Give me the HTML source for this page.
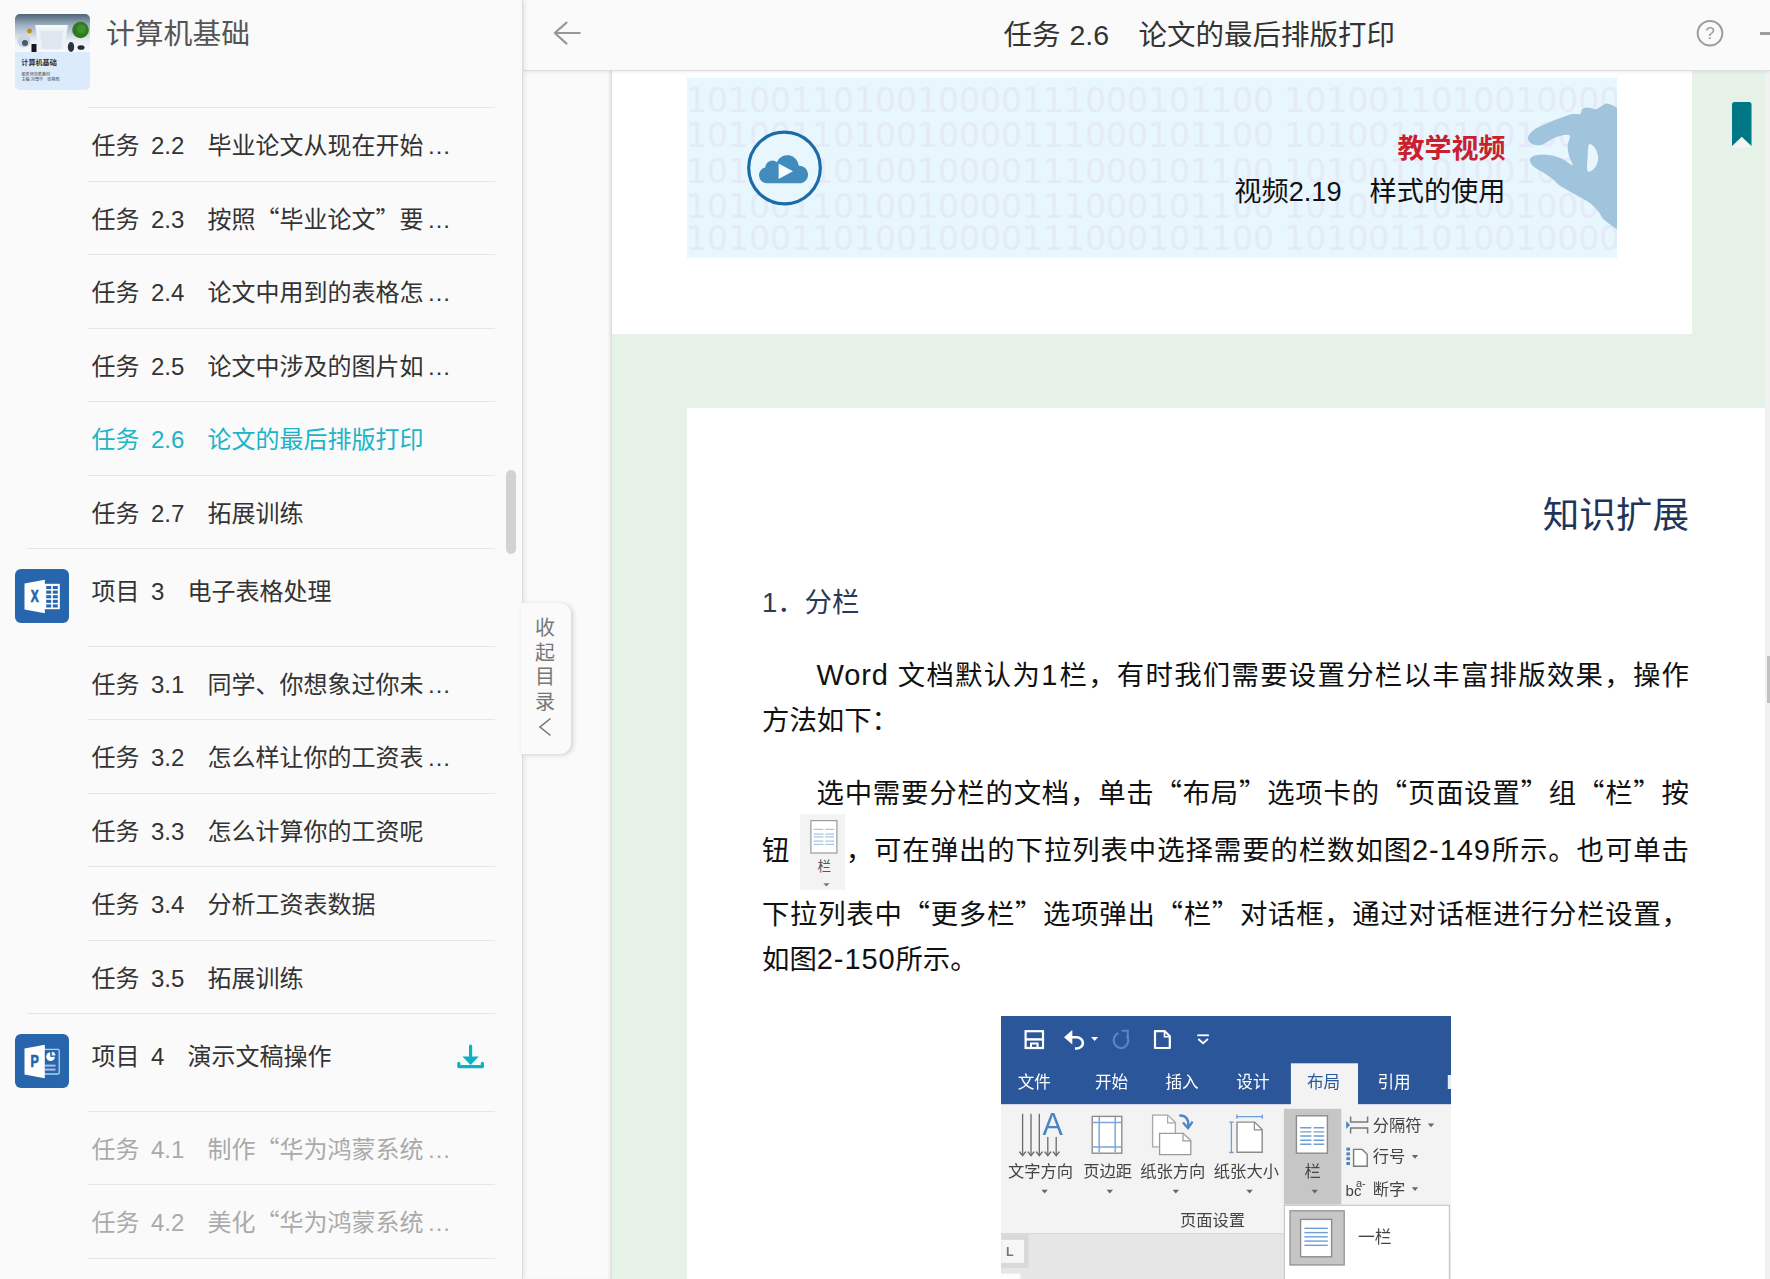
<!DOCTYPE html>
<html lang="zh-CN">
<head>
<meta charset="utf-8">
<title>任务 2.6 论文的最后排版打印</title>
<style>
*{box-sizing:border-box;margin:0;padding:0}
html,body{width:1770px;height:1279px;overflow:hidden;background:#fafafa}
body{position:relative;font-family:"Liberation Sans","Noto Sans CJK SC",sans-serif;color:#333}
.d{font-size:29px;line-height:0;letter-spacing:.9px}
.q{font-family:"Noto Sans CJK SC",sans-serif;line-height:0}
/* ---------- sidebar ---------- */
#side{position:absolute;left:0;top:0;width:523px;height:1279px;background:#fafafa;border-right:1px solid #dcdcdc;box-shadow:1px 0 5px rgba(0,0,0,.10);z-index:5}
#thumb{position:absolute;left:15px;top:14px;width:75px;height:75.5px;border-radius:5px;overflow:hidden;background:#dcebfb}
#thumb .ph{position:absolute;left:0;top:0;width:75px;height:38px;background:linear-gradient(180deg,#4e6477 0%,#9fb2c4 30%,#e9eff5 70%,#f8fafc 100%)}
#thumb .t1{position:absolute;left:6.3px;top:44.7px;font-size:7.1px;line-height:8px;color:#333;font-weight:bold;white-space:nowrap}
#thumb .t2{position:absolute;left:6.5px;top:58.2px;font-size:4.1px;line-height:5.3px;color:#444;white-space:nowrap}
#btitle{position:absolute;left:106px;top:14px;font-size:28.8px;line-height:40px;color:#555;white-space:nowrap}
.it{position:absolute;left:88px;width:407px;height:74px;border-top:1px solid #e6e6e6;font-size:24px;line-height:74px;white-space:nowrap;color:#333}
.it b{font-weight:normal;position:absolute;top:1px}
.it .a{left:3.5px}.it .n{left:63px}.it .t{left:119.5px}
.it i{font-style:normal;margin-left:3.4px}
.it.on{color:#1cb4c7}
.it.dis{color:#aaa}
.pj{position:absolute;left:27px;width:468px;height:98px;border-top:1px solid #e6e6e6;font-size:24px;white-space:nowrap;color:#333}
.pj b{font-weight:normal;position:absolute;top:26px;line-height:34px}
.pj .a{left:64.5px}.pj .n{left:124px}.pj .t{left:160.5px}
.pj svg{position:absolute;left:-11.7px;top:20.4px}
#sthumb{position:absolute;left:506px;top:470px;width:10px;height:84px;border-radius:5px;background:#d2d2d2}
#fold{position:absolute;left:521px;top:603px;width:50px;height:151px;background:#fafafa;border-radius:0 11px 11px 0;box-shadow:2px 1px 5px rgba(0,0,0,.16);z-index:6;font-size:20px;color:#777;text-align:center}
#fold span{position:absolute;left:2px;width:44px;height:24px;line-height:24px;text-align:center}
/* ---------- header ---------- */
#hd{position:absolute;left:524px;top:0;width:1246px;height:71px;background:#fafafa;border-bottom:1px solid #dedede;box-shadow:0 1px 3px rgba(0,0,0,.08);z-index:4}
#hd b{font-weight:normal;position:absolute;top:15px;font-size:28.5px;line-height:40px;color:#333;white-space:nowrap}
/* ---------- main ---------- */
#gut{position:absolute;left:524px;top:70px;width:88px;height:1209px;background:#fafafa;box-shadow:inset -4px 0 4px -3px rgba(0,0,0,.18)}
#main{position:absolute;left:612px;top:70px;width:1153px;height:1209px;background:#e6f2e8;overflow:hidden}
#track{position:absolute;left:1765px;top:70px;width:5px;height:1209px;background:#f1f1f1}
#track i{position:absolute;left:2px;top:586px;width:3px;height:47px;background:#c1c1c1}
#c1{position:absolute;left:0;top:0;width:1080px;height:264px;background:#fff}
#ban{position:absolute;left:75px;top:8px;width:930px;height:180px;background:#e8f6fe;overflow:hidden}
#ban .bits{position:absolute;left:-1px;top:5px;font-family:"DejaVu Sans",sans-serif;font-size:33px;line-height:35.3px;color:#e4ebf7;white-space:nowrap}
#ban .bits p:last-child{margin-top:-3px}
#ban .r{position:absolute;right:111.5px;top:52.5px;font-size:27px;line-height:36px;font-weight:bold;color:#c8202f;white-space:nowrap}
#ban .s{position:absolute;right:111.5px;top:96px;font-size:27.2px;line-height:36px;color:#111;white-space:nowrap}
#c2{position:absolute;left:75px;top:338px;width:1078px;height:900px;background:#fff}
#kt{position:absolute;right:76px;top:83px;font-size:36.6px;line-height:50px;color:#1f3557;white-space:nowrap}
#h1{position:absolute;left:75px;top:175px;font-size:27.4px;line-height:40px;color:#2b3a55;white-space:nowrap}
.p{position:absolute;left:75px;width:927px;font-size:27.4px;line-height:45px;color:#111}
.p div{white-space:nowrap;text-align:justify;text-align-last:justify}
.p div.l{text-align-last:left}
.p div.i{padding-left:54.5px}
.ic{display:inline-block;position:relative;width:45px;height:76px;margin:-1.5px 0 0 .9px;vertical-align:middle;background:#f3f3f3;letter-spacing:0}
.ic svg{position:absolute;left:0;top:0}
.ic em{text-align-last:center;position:absolute;left:0;top:44px;width:45px;text-align:center;font-style:normal;font-size:13.5px;line-height:18px;color:#555;padding-left:4px}
</style>
</head>
<body>
<div id="side">
<div id="thumb"><div class="ph"></div>
<svg width="75" height="38" viewBox="0 0 75 38" style="position:absolute;left:0;top:0">
<polygon points="20,11 53,11 49,36 24,36" fill="#eef3f8"/>
<rect x="22" y="11" width="29" height="3.2" fill="#f4fbf0"/>
<polygon points="25,17 48,17 46,35 27,35" fill="#dfe7f1"/>
<circle cx="65.5" cy="16" r="8.3" fill="#2f7a1f"/><circle cx="66.5" cy="15" r="4.5" fill="#3f8f2a"/>
<circle cx="9" cy="27" r="6.5" fill="#c9d5e0"/><circle cx="10" cy="29" r="3" fill="#49586a"/>
<circle cx="14.5" cy="17" r="2.4" fill="#c08a1c"/>
<rect x="16.5" y="30" width="5" height="8" fill="#15181d"/>
<ellipse cx="56" cy="33" rx="3.2" ry="5" fill="#2b3440"/><ellipse cx="66" cy="33.5" rx="3.5" ry="2.3" fill="#232a33"/>
</svg>
<div class="t1">计算机基础</div><div class="t2">服务师范类教材<br>主编:刘雪华　张艳辉</div></div>
<div id="btitle">计算机基础</div>
<div class="it " style="top:107px"><b class="a">任务</b><b class="n">2.2</b><b class="t">毕业论文从现在开始<i>…</i></b></div>
<div class="it " style="top:181px"><b class="a">任务</b><b class="n">2.3</b><b class="t">按照<span class="q">“</span>毕业论文<span class="q">”</span>要<i>…</i></b></div>
<div class="it " style="top:254px"><b class="a">任务</b><b class="n">2.4</b><b class="t">论文中用到的表格怎<i>…</i></b></div>
<div class="it " style="top:328px"><b class="a">任务</b><b class="n">2.5</b><b class="t">论文中涉及的图片如<i>…</i></b></div>
<div class="it on" style="top:401px"><b class="a">任务</b><b class="n">2.6</b><b class="t">论文的最后排版打印</b></div>
<div class="it " style="top:475px"><b class="a">任务</b><b class="n">2.7</b><b class="t">拓展训练</b></div>
<div class="it " style="top:646px"><b class="a">任务</b><b class="n">3.1</b><b class="t">同学、你想象过你未<i>…</i></b></div>
<div class="it " style="top:719px"><b class="a">任务</b><b class="n">3.2</b><b class="t">怎么样让你的工资表<i>…</i></b></div>
<div class="it " style="top:793px"><b class="a">任务</b><b class="n">3.3</b><b class="t">怎么计算你的工资呢</b></div>
<div class="it " style="top:866px"><b class="a">任务</b><b class="n">3.4</b><b class="t">分析工资表数据</b></div>
<div class="it " style="top:940px"><b class="a">任务</b><b class="n">3.5</b><b class="t">拓展训练</b></div>
<div class="it dis" style="top:1111px"><b class="a">任务</b><b class="n">4.1</b><b class="t">制作<span class="q">“</span>华为鸿蒙系统<i>…</i></b></div>
<div class="it dis" style="top:1184px"><b class="a">任务</b><b class="n">4.2</b><b class="t">美化<span class="q">“</span>华为鸿蒙系统<i>…</i></b></div>
<div class="it dis" style="top:1258px"></div>
<div class="pj" style="top:548px"><svg width="54" height="54" viewBox="0 0 54 54"><rect width="54" height="54" rx="6" fill="#2765ad"/>
<rect x="29" y="14.8" width="15.8" height="25.4" fill="#fff"/>
<g fill="#2765ad"><rect x="31.2" y="17" width="5" height="3.1"/><rect x="37.8" y="17" width="5" height="3.1"/>
<rect x="31.2" y="21.6" width="5" height="3.1"/><rect x="37.8" y="21.6" width="5" height="3.1"/>
<rect x="31.2" y="26.2" width="5" height="3.1"/><rect x="37.8" y="26.2" width="5" height="3.1"/>
<rect x="31.2" y="30.8" width="5" height="3.1"/><rect x="37.8" y="30.8" width="5" height="3.1"/>
<rect x="31.2" y="35.4" width="5" height="3.1"/><rect x="37.8" y="35.4" width="5" height="3.1"/></g>
<polygon points="9.5,14.4 29.8,10.8 29.8,44.2 9.5,40.6" fill="#fff"/>
<text x="15.700" y="33.100" font-size="16.800" font-weight="bold" textLength="8" lengthAdjust="spacingAndGlyphs" fill="#2765ad" stroke="#2765ad" stroke-width=".7" font-family="Liberation Sans, sans-serif">X</text></svg><b class="a">项目</b><b class="n">3</b><b class="t">电子表格处理</b></div>
<div class="pj" style="top:1013px"><svg width="54" height="54" viewBox="0 0 54 54"><rect width="54" height="54" rx="6" fill="#2765ad"/>
<rect x="28" y="15.4" width="16.2" height="24.6" rx="1.2" fill="none" stroke="#b9cfea" stroke-width="1.3"/>
<circle cx="35.6" cy="22.6" r="4.4" fill="#fff"/><path d="M35.6 22.6v-4.9a4.9 4.9 0 0 1 4.9 4.9z" fill="#2765ad" stroke="#2765ad" stroke-width=".8"/>
<path d="M36.8 21.4v-3.7a4 4 0 0 1 3.7 3.7z" fill="#e8f0fa"/>
<rect x="30" y="30.6" width="10.5" height="2" fill="#a9c3e4"/><rect x="30" y="34.6" width="10.5" height="2" fill="#a9c3e4"/>
<polygon points="9.5,14.4 29.8,10.8 29.8,44.2 9.5,40.6" fill="#fff"/>
<text x="15.600" y="33.100" font-size="16.200" font-weight="bold" textLength="8.300" lengthAdjust="spacingAndGlyphs" fill="#2765ad" stroke="#2765ad" stroke-width=".7" font-family="Liberation Sans, sans-serif">P</text></svg><b class="a">项目</b><b class="n">4</b><b class="t">演示文稿操作</b><svg width="30" height="28" viewBox="0 0 30 28" style="left:428px;top:29.200px"><g fill="none" stroke="#0db1c4" stroke-width="3.2" stroke-linecap="round" stroke-linejoin="round"><path d="M15.6 3v10"/><path d="M3.8 20.4v3.2h23.6v-3.2"/></g><polygon points="7.4,13.4 23.8,13.4 15.6,22" fill="#0db1c4"/></svg></div>
<div id="sthumb"></div>
</div>
<div id="fold"><span style="top:13px">收</span><span style="top:37.5px">起</span><span style="top:62px">目</span><span style="top:86.5px">录</span><svg width="16" height="22" viewBox="0 0 16 22" style="position:absolute;left:16px;top:113px"><path d="M13.5 2.5L3 11l10.5 8.5" fill="none" stroke="#777" stroke-width="1.6"/></svg></div>
<div id="hd">
<svg width="34" height="30" viewBox="0 0 34 30" style="position:absolute;left:25px;top:18px"><path d="M30.800 15H6.200M17.500 4.600L5.800 15l11.700 10.600" fill="none" stroke="#979797" stroke-width="2.100" stroke-linecap="round" stroke-linejoin="round"/></svg>
<b style="left:479.5px">任务</b><b style="left:545.5px">2.6</b><b style="left:614.5px">论文的最后排版打印</b>
<svg width="30" height="30" viewBox="0 0 30 30" style="position:absolute;left:1171px;top:18px"><circle cx="15" cy="15.2" r="12.3" fill="none" stroke="#9c9c9c" stroke-width="2"/><text x="15" y="21.3" font-size="17" text-anchor="middle" fill="#9c9c9c" font-family="Liberation Sans, sans-serif">?</text></svg>
<i style="position:absolute;left:1236px;top:32px;width:12px;height:3px;background:#9c9c9c"></i>
</div>
<div id="gut"></div>
<div id="main">
<div id="c1">
<div id="ban">
<div class="bits"><p>1010011010010000111000101100 1010011010010000111000101100</p><p>1010011010010000111000101100 1010011010010000111000101100</p><p>1010011010010000111000101100 1010011010010000111000101100</p><p>1010011010010000111000101100 1010011010010000111000101100</p><p>1010011010010000111000101100 1010011010010000111000101100</p></div>
<svg width="930" height="180" viewBox="0 0 930 180" style="position:absolute;left:0;top:0">
<path d="M931.2 30.5C930.4 30.1 928.2 28.6 926.2 27.8C924.2 26.9 921.5 25.3 919.3 25.5C917.2 25.7 915.0 28.1 913.1 29.0C911.2 30.0 910.2 31.2 908.1 31.3C906.0 31.4 902.8 29.6 900.6 29.6C898.4 29.7 896.2 30.5 894.9 31.5C893.7 32.6 895.1 35.1 893.1 35.9C891.1 36.7 888.1 35.2 883.1 36.5C878.1 37.9 868.7 41.7 863.0 44.0C857.4 46.3 852.9 48.0 849.3 50.3C845.7 52.6 842.7 55.5 841.5 57.8C840.4 60.1 841.1 62.5 842.4 64.0C843.7 65.6 846.9 66.9 849.3 67.2C851.7 67.5 853.5 67.3 856.8 65.9C860.1 64.6 865.0 60.5 869.3 59.0C873.6 57.6 880.6 55.7 882.4 57.2C884.3 58.6 880.6 64.2 880.6 67.8C880.6 71.4 881.6 75.8 882.4 79.1C883.3 82.3 886.7 86.9 885.6 87.2C884.4 87.5 879.3 82.6 875.6 80.9C871.8 79.3 867.4 77.8 863.0 77.2C858.7 76.6 852.6 76.6 849.3 77.2C845.9 77.8 843.7 79.2 843.0 80.9C842.4 82.7 843.4 85.6 845.5 87.8C847.6 90.0 852.2 91.9 855.5 94.1C858.9 96.3 862.6 98.7 865.5 101.0C868.5 103.2 869.3 105.2 873.1 107.8C876.8 110.4 883.1 113.7 888.1 116.6C893.1 119.5 899.1 122.4 903.1 125.3C907.0 128.3 909.5 131.4 911.8 134.1C914.1 136.8 913.6 138.6 916.8 141.6C920.1 144.6 928.8 150.5 931.2 152.2Z" fill="#a0c4dc"/>
<path d="M902.1 66.5C903.3 65.0 906.6 68.1 908.1 70.3C909.6 72.5 911.1 76.7 911.2 79.7C911.3 82.7 910.1 86.1 908.7 88.4C907.4 90.7 904.5 92.9 903.1 93.4C901.7 94.0 900.6 93.9 900.2 91.6C899.8 89.3 900.3 83.9 900.6 79.7C900.9 75.5 900.8 68.1 902.1 66.5Z" fill="#e8f6fe"/>
<circle cx="97.5" cy="90" r="35.8" fill="#e8f6fe" stroke="#1a6ba6" stroke-width="3.2"/>
<path d="M79.5 105.2a8 8 0 0 1 -1.2 -15.8a7.2 7.2 0 0 1 11.6 -5.2a11.4 11.4 0 0 1 21.9 3.6a8.8 8.8 0 0 1 2.3 17.4z" fill="#428cbd"/>
<polygon points="91.6,85.4 91.6,101 106,93.2" fill="#f4fbff"/>
</svg>
<div class="r">教学视频</div>
<div class="s">视频2.19<span style="display:inline-block;width:28px"></span>样式的使用</div>
</div>
</div>
<svg width="22" height="48" viewBox="0 0 22 48" style="position:absolute;left:1119px;top:31px"><polygon points="0,1 22,1 22,47 0,47" fill="#f3f5f3" opacity="0"/><path d="M1 3.5a2.5 2.5 0 0 1 2.500 -2.500h14.500a2.500 2.500 0 0 1 2.500 2.500v41.500l-9.750 -9.300l-9.750 9.300z" fill="#007786"/><polygon points="1.300,46.500 11,37 20.700,46.500" fill="#f4f4f2"/></svg>
<div id="c2">
<div id="kt">知识扩展</div>
<div id="h1">1．分栏</div>
<div class="p" style="top:244.5px">
<div class="i"><span class="d" style="letter-spacing:.9px">Word</span> 文档默认为<span class="d">1</span>栏，有时我们需要设置分栏以丰富排版效果，操作</div>
<div class="l">方法如下：</div>
</div>
<div class="p" style="top:362.5px">
<div class="i">选中需要分栏的文档，单击<span class="q">“</span>布局<span class="q">”</span>选项卡的<span class="q">“</span>页面设置<span class="q">”</span>组<span class="q">“</span>栏<span class="q">”</span>按</div>
<div style="padding-bottom:2.4px">钮 <span class="ic"><svg width="45" height="76" viewBox="0 0 45 76"><rect x="10.900" y="6.600" width="26" height="32.400" fill="#fff" stroke="#9a9a9a" stroke-width="1.200"/><g stroke="#a9c5e2" stroke-width="1.300"><path d="M13.800 15.400h9.600M25.300 15.400h8.800M13.800 20.200h9.600M25.300 20.200h8.800M13.800 22.900h9.600M25.300 22.900h8.800M13.800 27.100h9.600M25.300 27.100h8.800M13.800 30.300h9.600M25.300 30.300h8.800"/></g><polygon points="23.200,69.200 29.600,69.200 26.400,72.600" fill="#777"/></svg><em>栏</em></span>，可在弹出的下拉列表中选择需要的栏数如图<span class="d">2-149</span>所示。也可单击</div>
<div>下拉列表中<span class="q">“</span>更多栏<span class="q">”</span>选项弹出<span class="q">“</span>栏<span class="q">”</span>对话框，通过对话框进行分栏设置，</div>
<div class="l">如图<span class="d">2-150</span>所示。</div>
</div>
<svg id="rib" style="filter:blur(.35px);position:absolute;left:313.7px;top:608.2px" width="450" height="263" viewBox="0 0 450 263" font-family="Liberation Sans, Noto Sans CJK SC, sans-serif">
<rect width="450" height="263" fill="#e6e6e6"/>
<rect width="450" height="88.4" fill="#2b579a"/>
<rect y="88.4" width="450" height="129" fill="#f3f3f3"/>
<rect y="217.2" width="450" height="1" fill="#d6d6d6"/>
<rect x="289.9" y="47.3" width="67.1" height="42" fill="#f3f3f3"/>
<g fill="none" stroke="#fff" stroke-width="2.2"><rect x="24.6" y="15.2" width="17.4" height="16.8"/><path d="M24.6 23.4h17.4" stroke-width="2.4"/><path d="M30 32v-4.600h6.600v4.600" stroke-width="2"/></g>
<path d="M66 21.300h9.500a6.400 5.600 0 0 1 0 11.200h-1.500" fill="none" stroke="#fff" stroke-width="2.600"/><polygon points="63,21.300 71.300,14 71.300,28.600" fill="#fff"/>
<polygon points="90.1,21.0 97.1,21.0 93.6,25.0" fill="#fff"/>
<path d="M125.800 19.500a7.300 7.800 0 1 1 -8.500 -2.500" fill="none" stroke="#5b86c3" stroke-width="2.200"/><path d="M120.500 14.800h6.300v6.300" fill="none" stroke="#5b86c3" stroke-width="2"/>
<path d="M154 15.200h9.800l5 5v11.800h-14.800z" fill="none" stroke="#fff" stroke-width="2.200" stroke-linejoin="round"/><path d="M163.500 15.500v5.300h5.300" fill="none" stroke="#fff" stroke-width="1.600"/>
<path d="M196.300 19.300h11.600" stroke="#fff" stroke-width="1.800"/><path d="M197.300 23l4.800 4.200l4.800 -4.200" fill="none" stroke="#fff" stroke-width="1.900"/>
<text x="33.3" y="72.300" font-size="16.600" text-anchor="middle" fill="#fff">文件</text>
<text x="110.6" y="72.300" font-size="16.600" text-anchor="middle" fill="#fff">开始</text>
<text x="181" y="72.300" font-size="16.600" text-anchor="middle" fill="#fff">插入</text>
<text x="251.9" y="72.300" font-size="16.600" text-anchor="middle" fill="#fff">设计</text>
<text x="393.1" y="72.300" font-size="16.600" text-anchor="middle" fill="#fff">引用</text>
<text x="322.5" y="72.300" font-size="16.600" text-anchor="middle" fill="#2b579a">布局</text>
<rect x="446.800" y="59" width="3.200" height="14" fill="#e8eef7"/>
<path d="M21.6 97.8V139.300" stroke="#6a6a6a" stroke-width="1.300"/><path d="M18.400000000000002 135.6L21.6 139.6L24.8 135.6" fill="none" stroke="#6a6a6a" stroke-width="1.500"/>
<path d="M30 97.8V139.300" stroke="#6a6a6a" stroke-width="1.300"/><path d="M26.8 135.6L30 139.6L33.2 135.6" fill="none" stroke="#6a6a6a" stroke-width="1.500"/>
<path d="M38.3 97.8V139.300" stroke="#6a6a6a" stroke-width="1.300"/><path d="M35.099999999999994 135.6L38.3 139.6L41.5 135.6" fill="none" stroke="#6a6a6a" stroke-width="1.500"/>
<path d="M46.8 121V139.300" stroke="#6a6a6a" stroke-width="1.300"/><path d="M43.599999999999994 135.6L46.8 139.6L50.0 135.6" fill="none" stroke="#6a6a6a" stroke-width="1.500"/>
<path d="M55.2 121V139.300" stroke="#6a6a6a" stroke-width="1.300"/><path d="M52.0 135.6L55.2 139.6L58.400000000000006 135.6" fill="none" stroke="#6a6a6a" stroke-width="1.500"/>
<text x="51.7" y="119" font-size="30.500" text-anchor="middle" fill="#4a86c6">A</text>
<rect x="91.200" y="100.400" width="29.600" height="36.800" fill="#fff" stroke="#8c8c8c" stroke-width="1.400"/>
<g stroke="#7aa7d8" stroke-width="1.500"><path d="M98.200 101v35.600M114.200 101v35.600M92 106.600h28M92 131h28"/></g>
<path d="M151.600 99.100h15.200l7.600 7.400v24.400h-22.800z" fill="#fff" stroke="#a8a8a8" stroke-width="1.300"/><path d="M166.600 99.400v7.400h7.600" fill="none" stroke="#a8a8a8" stroke-width="1.200"/>
<path d="M158.600 117.400h23.600l7.600 7.200v14h-31.200z" fill="#fff" stroke="#9a9a9a" stroke-width="1.300"/><path d="M182 117.700v7.200h7.600" fill="none" stroke="#9a9a9a" stroke-width="1.200"/>
<path d="M178.300 99.600c6.500 -0.500 9.600 3.600 8.800 10.200" fill="none" stroke="#4a86c6" stroke-width="2.400"/><path d="M182 106.400l5 5.800l4.600 -6.600" fill="none" stroke="#4a86c6" stroke-width="2.300"/>
<path d="M236 106.100h17.600l7.600 7.400v22.800h-25.200z" fill="#fff" stroke="#8c8c8c" stroke-width="1.400"/><path d="M253.400 106.400v7.400h7.600" fill="none" stroke="#8c8c8c" stroke-width="1.200"/>
<g stroke="#6c9fd6" stroke-width="1.300"><path d="M235.600 100.600h26M235.900 98.400v4.400M261.300 98.400v4.400M230.400 105.800v31M228.200 106.100h4.400M228.200 136.500h4.400"/></g>
<rect x="282.900" y="92.800" width="57.400" height="95.600" fill="#c6c6c6"/>
<rect x="295.400" y="99.800" width="31" height="37.400" fill="#fff" stroke="#8c8c8c" stroke-width="1.400"/>
<path d="M299.200 111.8h11.200M312.600 111.8h10.600" stroke="#6c9fd6" stroke-width="1.400"/>
<path d="M299.200 115.9h11.200M312.600 115.9h10.600" stroke="#6c9fd6" stroke-width="1.400"/>
<path d="M299.200 120h11.200M312.600 120h10.600" stroke="#6c9fd6" stroke-width="1.400"/>
<path d="M299.200 124.2h11.200M312.600 124.2h10.600" stroke="#6c9fd6" stroke-width="1.400"/>
<path d="M299.200 128.3h11.200M312.600 128.3h10.600" stroke="#6c9fd6" stroke-width="1.400"/>
<text x="39.5" y="160.600" font-size="16.300" text-anchor="middle" fill="#444">文字方向</text>
<text x="106.6" y="160.600" font-size="16.300" text-anchor="middle" fill="#444">页边距</text>
<text x="171.7" y="160.600" font-size="16.300" text-anchor="middle" fill="#444">纸张方向</text>
<text x="245.4" y="160.600" font-size="16.300" text-anchor="middle" fill="#444">纸张大小</text>
<text x="311.6" y="160.600" font-size="16.300" text-anchor="middle" fill="#444">栏</text>
<polygon points="40.4,173.8 46.8,173.8 43.6,177.4" fill="#666"/>
<polygon points="105.6,173.8 112.0,173.8 108.8,177.4" fill="#666"/>
<polygon points="171.6,173.8 178.0,173.8 174.8,177.4" fill="#666"/>
<polygon points="245.4,173.8 251.8,173.8 248.6,177.4" fill="#666"/>
<polygon points="310.5,173.8 316.9,173.8 313.7,177.4" fill="#666"/>
<polygon points="345.200,105 345.200,113 349,109" fill="#4a86c6"/><path d="M349.600 100.400v5.600h17v-5.600M349.600 117.600v-5.600h17v5.600" fill="none" stroke="#7a7a7a" stroke-width="1.500"/>
<text x="371.700" y="114.800" font-size="16.300" fill="#444">分隔符</text><polygon points="426.8,107.6 433.2,107.6 430.0,111.2" fill="#666"/>
<path d="M352.600 133.400h8.600l5 4.800v12h-13.600z" fill="#fff" stroke="#7a7a7a" stroke-width="1.400"/>
<g fill="#4a86c6"><rect x="345.400" y="131.600" width="3.600" height="3"/><rect x="345.400" y="136.400" width="3.600" height="3"/><rect x="345.400" y="141.200" width="3.600" height="3"/><rect x="345.400" y="146" width="3.600" height="3"/></g>
<text x="371.700" y="146.300" font-size="16.300" fill="#444">行号</text><polygon points="410.8,139.1 417.2,139.1 414.0,142.7" fill="#666"/>
<text x="344.600" y="180" font-size="15" fill="#444">bc</text><text x="355" y="170.500" font-size="11" fill="#444">a-</text>
<text x="371.700" y="178.500" font-size="16.300" fill="#444">断字</text><polygon points="410.8,171.3 417.2,171.3 414.0,174.9" fill="#666"/>
<text x="211.5" y="210.200" font-size="16.300" text-anchor="middle" fill="#444">页面设置</text>
<rect x="0" y="218.200" width="27.600" height="33.600" fill="#d9d9d9"/><rect x="0.300" y="223.800" width="22.700" height="23" fill="#f6f6f6"/><text x="5" y="239.800" font-size="12.500" font-weight="bold" fill="#777">L</text><rect x="0" y="257.600" width="19.400" height="5.400" fill="#fdfdfd"/>
<rect x="283.400" y="189.300" width="165" height="80" fill="#fff" stroke="#c8c8c8" stroke-width="1.200"/>
<rect x="289" y="194.800" width="54.200" height="54.200" fill="#c6c6c6" stroke="#8e8a8a" stroke-width="1.200"/>
<rect x="299.600" y="203.400" width="31" height="37.400" fill="#fff" stroke="#8c8c8c" stroke-width="1.400"/>
<path d="M303.400 212.3h23.400" stroke="#6c9fd6" stroke-width="1.400"/>
<path d="M303.400 216.6h23.400" stroke="#6c9fd6" stroke-width="1.400"/>
<path d="M303.400 220.8h23.400" stroke="#6c9fd6" stroke-width="1.400"/>
<path d="M303.400 225.1h23.400" stroke="#6c9fd6" stroke-width="1.400"/>
<path d="M303.400 229.3h23.400" stroke="#6c9fd6" stroke-width="1.400"/>
<text x="357" y="226.800" font-size="16.800" fill="#444">一栏</text>
</svg>
</div>
</div>
<div id="track"><i></i></div>
</body>
</html>
